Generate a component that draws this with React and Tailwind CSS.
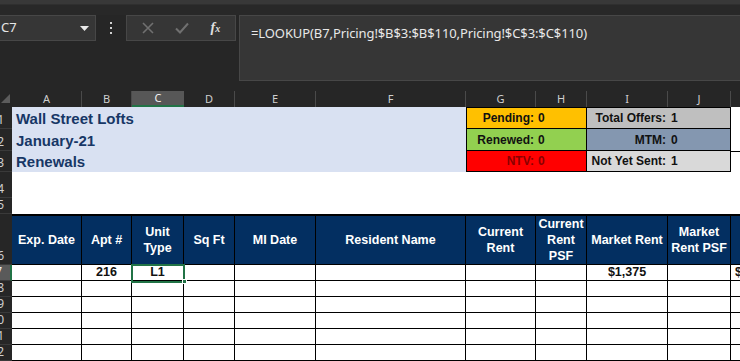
import React from "react";

const cols = [
  { k: "A", w: "w-[70px]" },
  { k: "B", w: "w-[50px]" },
  { k: "C", w: "w-[52px]" },
  { k: "D", w: "w-[51px]" },
  { k: "E", w: "w-[81px]" },
  { k: "F", w: "w-[150px]" },
  { k: "G", w: "w-[70px]" },
  { k: "H", w: "w-[51px]" },
  { k: "I", w: "w-[81px]" },
  { k: "J", w: "w-[63px]" },
  { k: "K", w: "w-[60px]" },
];

const headers = [
  ["Exp. Date"],
  ["Apt #"],
  ["Unit", "Type"],
  ["Sq Ft"],
  ["MI Date"],
  ["Resident Name"],
  ["Current", "Rent"],
  ["Current", "Rent", "PSF"],
  ["Market Rent"],
  ["Market", "Rent PSF"],
  [],
];

function RowHead({ n, h, active }) {
  return (
    <div
      className={`w-[12px] shrink-0 ${h} overflow-hidden flex items-end justify-end pr-[8px] pb-[1px] text-[12px] leading-[14px] whitespace-nowrap border-b border-[#3a3a3a] ${
        active
          ? "bg-[#5a5a5a] text-[#f0f0f0] border-r-2 border-r-[#217346]"
          : "bg-[#262626] text-[#cfcfcf]"
      }`}
      style={{ fontFamily: '"Noto Sans", sans-serif' }}
    >
      {n}
    </div>
  );
}

export default function App() {
  const arial = { fontFamily: '"Liberation Sans", Arial, sans-serif' };
  const ui = { fontFamily: '"Noto Sans", "Open Sans", sans-serif' };
  return (
    <div className="relative w-[740px] h-[361px] overflow-hidden bg-[#262626]">
      {/* top strip */}
      <div className="h-[5px] bg-[#383838] border-b border-[#2f2f2f]" />
      <div className="h-[10px] bg-[#282828]" />

      {/* formula bar */}
      <div className="flex h-[66px] items-start" style={ui}>
        <div className="w-[96px] h-[26px] bg-[#363636] border border-l-0 border-[#474747] flex items-center justify-between pl-[1px] pr-[6px]">
          <span className="text-[13px] text-[#e6e6e6]">C7</span>
          <svg width="9" height="5" viewBox="0 0 9 5">
            <path d="M0 0 L9 0 L4.5 5 Z" fill="#e8e8e8" />
          </svg>
        </div>
        <div className="w-[30px] h-[26px] flex flex-col items-center justify-center gap-[3px]">
          <div className="w-[2px] h-[2px] bg-[#d0d0d0]" />
          <div className="w-[2px] h-[2px] bg-[#d0d0d0]" />
          <div className="w-[2px] h-[2px] bg-[#d0d0d0]" />
        </div>
        <div className="w-[110px] h-[26px] bg-[#363636] border border-[#474747] flex items-center justify-around px-[4px]">
          <svg width="12" height="12" viewBox="0 0 12 12">
            <path d="M1 1 L11 11 M11 1 L1 11" stroke="#707070" strokeWidth="1.6" />
          </svg>
          <svg width="14" height="12" viewBox="0 0 14 12">
            <path d="M1 6.5 L5 10.5 L13 1.5" stroke="#707070" strokeWidth="2" fill="none" />
          </svg>
          <span
            className="text-[14px] italic font-bold text-[#e0e0e0] leading-none"
            style={{ fontFamily: '"Liberation Serif", serif' }}
          >
            f<span className="text-[10px]">x</span>
          </span>
        </div>
        <div className="ml-[3px] flex-1 h-[66px] bg-[#363636] border border-r-0 border-[#474747] pl-[11px] pt-[4px]">
          <span className="text-[13px] text-[#e8e8e8] tracking-[-0.1px]">
            =LOOKUP(B7,Pricing!$B$3:$B$110,Pricing!$C$3:$C$110)
          </span>
        </div>
      </div>

      <div className="h-[10px]" />

      {/* column headers */}
      <div className="flex h-[16px]" style={ui}>
        <div className="w-[12px] shrink-0 relative">
          <svg className="absolute left-[1px] top-[3px]" width="9" height="9" viewBox="0 0 9 9">
            <path d="M9 0 L9 9 L0 9 Z" fill="#5c5c5c" />
          </svg>
        </div>
        {cols.map((c) => (
          <div
            key={c.k}
            className={`${c.w} shrink-0 flex items-center justify-center text-[11px] ${
              c.k === "C"
                ? "bg-[#575757] text-[#f2f2f2] border-b-2 border-[#217346]"
                : "text-[#cfcfcf] border-r border-[#4a4a4a]"
            }`}
          >
            {c.k}
          </div>
        ))}
      </div>

      {/* rows 1-3 */}
      <div style={arial}>
        {[
          { n: 1, h: "h-[22px]", title: "Wall Street Lofts" },
          { n: 2, h: "h-[22px]", title: "January-21" },
          { n: 3, h: "h-[21px]", title: "Renewals" },
        ].map((r, i) => {
          const gh = [
            { l: "Pending:", v: "0", bg: "bg-[#ffc000]", c: "text-[#111]" },
            { l: "Renewed:", v: "0", bg: "bg-[#92d050]", c: "text-[#111]" },
            { l: "NTV:", v: "0", bg: "bg-[#ff0000]", c: "text-[#8a0000]" },
          ][i];
          const ij = [
            { l: "Total Offers:", v: "1", bg: "bg-[#bfbfbf]" },
            { l: "MTM:", v: "0", bg: "bg-[#8497b0]" },
            { l: "Not Yet Sent:", v: "1", bg: "bg-[#d9d9d9]" },
          ][i];
          return (
            <div key={r.n} className={`flex ${r.h}`}>
              <RowHead n={r.n} h={r.h} />
              <div className="w-[454px] shrink-0 bg-[#d9e1f2] flex items-center pl-[4px] pt-[2px] text-[15px] font-bold text-[#173766]">
                {r.title}
              </div>
              <div
                className={`w-[121px] shrink-0 flex ${gh.bg} border-l border-r border-b border-black ${
                  i === 0 ? "border-t" : ""
                } text-[12px] font-bold`}
              >
                <div className={`w-[69px] flex items-center justify-end pr-[2px] ${gh.c}`}>{gh.l}</div>
                <div className={`flex-1 flex items-center pl-[2px] ${gh.c}`}>{gh.v}</div>
              </div>
              <div
                className={`w-[144px] shrink-0 flex ${ij.bg} border-r border-b border-black ${
                  i === 0 ? "border-t" : ""
                } text-[12px] font-bold text-[#111]`}
              >
                <div className="w-[80px] flex items-center justify-end pr-[1px]">{ij.l}</div>
                <div className="flex-1 flex items-center pl-[4px]">{ij.v}</div>
              </div>
              <div className={`flex-1 bg-white ${i === 2 ? "border-t border-black" : ""}`} />
            </div>
          );
        })}

        {/* rows 4-5 */}
        <div className="flex h-[26px]">
          <RowHead n={4} h="h-[26px]" />
          <div className="flex-1 bg-white" />
        </div>
        <div className="flex h-[16px]">
          <RowHead n={5} h="h-[16px]" />
          <div className="flex-1 bg-white" />
        </div>

        {/* row 6 header */}
        <div className="flex h-[51px]">
          <RowHead n={6} h="h-[51px]" />
          {cols.map((c, i) => (
            <div
              key={c.k}
              className={`${c.w} shrink-0 bg-[#032f61] border-t-2 border-b border-r border-black flex flex-col items-center justify-center text-white text-[12.5px] font-bold leading-[16px] text-center`}
            >
              {headers[i].map((t) => (
                <span key={t} className="whitespace-nowrap">
                  {t}
                </span>
              ))}
            </div>
          ))}
        </div>

        {/* data rows */}
        {[7, 8, 9, 10, 11, 12].map((n) => (
          <div key={n} className="flex h-[16px]">
            <RowHead n={n} h="h-[16px]" active={n === 7} />
            {cols.map((c) => {
              let v = "";
              let align = "justify-center";
              if (n === 7) {
                if (c.k === "B") v = "216";
                if (c.k === "C") v = "L1";
                if (c.k === "I") v = "$1,375";
                if (c.k === "K") {
                  v = "$1,4";
                  align = "justify-start pl-[4px]";
                }
              }
              return (
                <div
                  key={c.k}
                  className={`${c.w} shrink-0 bg-white border-r border-b border-black flex items-center ${align} text-[12.5px] font-bold text-[#111] leading-none overflow-hidden whitespace-nowrap`}
                >
                  {v}
                </div>
              );
            })}
          </div>
        ))}
      </div>

      {/* selection on C7 */}
      <div className="absolute left-[131px] top-[264px] w-[54px] h-[19px] border-2 border-[#217346] pointer-events-none" />
      <div className="absolute left-[182px] top-[279px] w-[5px] h-[5px] bg-[#217346] border border-white" />
    </div>
  );
}
